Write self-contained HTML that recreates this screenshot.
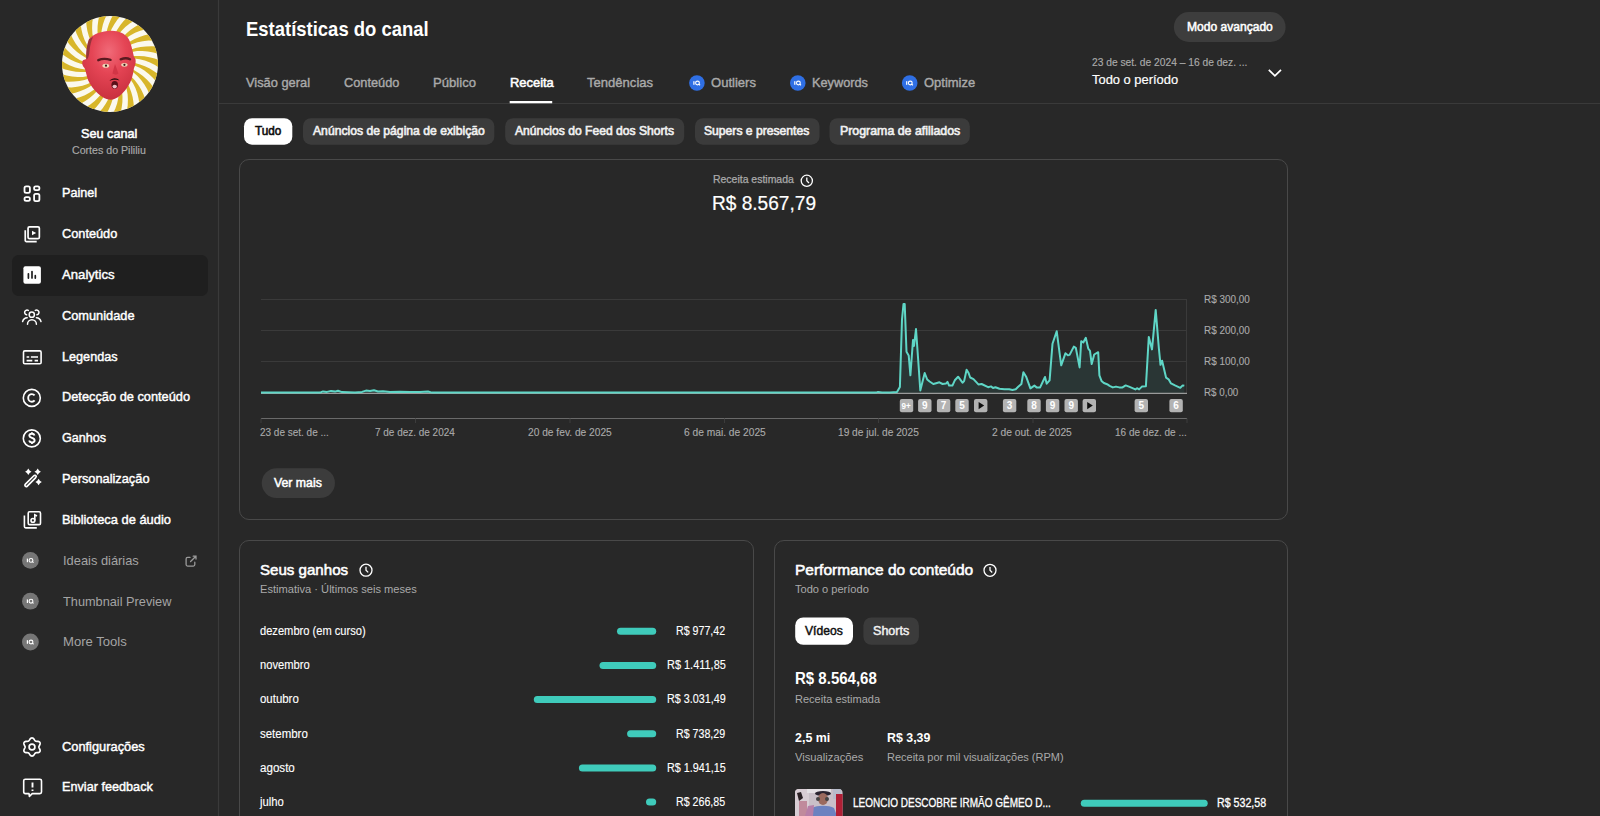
<!DOCTYPE html>
<html><head><meta charset="utf-8">
<style>
*{margin:0;padding:0;box-sizing:border-box}
html,body{width:1600px;height:816px;overflow:hidden;background:#282828;font-family:"Liberation Sans",sans-serif;color:#fff}
.full{position:absolute;left:0;top:0}
.t{position:absolute;white-space:nowrap;line-height:1;transform-origin:0 0}
.av{position:absolute;left:62.3px;top:16px;width:95.8px;height:95.8px;border-radius:50%;overflow:hidden}

</style></head><body>
<svg class="full" width="1600" height="816" viewBox="0 0 1600 816" font-family="Liberation Sans">
<line x1="218.5" y1="0" x2="218.5" y2="816" stroke="#3a3a3a" stroke-width="1.2"/>
<rect x="12" y="255" width="196" height="41" rx="6.5" fill="#1f1f1f"/>
<g transform="translate(20,181)" ><g fill="none" stroke="#fff" stroke-width="1.8"><rect x="4.5" y="5.3" width="5.4" height="6.6" rx="1.6"/><rect x="14.1" y="5.3" width="5.3" height="3.8" rx="1.6"/><rect x="4.5" y="16.1" width="5.4" height="3.7" rx="1.6"/><rect x="14.1" y="12.9" width="5.3" height="7.3" rx="1.6"/></g></g><g transform="translate(20,222)" ><g fill="none" stroke="#fff" stroke-width="1.7"><rect x="8.05" y="4.85" width="11.3" height="11.7" rx="1.4"/><path d="M5.25 8.2 V18.4 a1.2 1.2 0 0 0 1.2 1.2 H16.7"/></g><path d="M12 8.8 L16.2 11 L12 13.2 Z" fill="#fff"/></g><g transform="translate(20,263)" ><rect x="3.4" y="3.3" width="17.5" height="17.5" rx="2" fill="#fff"/><g stroke="#1f1f1f" stroke-width="1.7" stroke-linecap="round"><path d="M8.4 10.8 V15.1 M12 8.6 V14.9 M15.3 12.7 V15.1"/></g></g><g transform="translate(20,304)" ><g fill="none" stroke="#fff" stroke-width="1.5" stroke-linecap="round"><circle cx="11.8" cy="10.7" r="2.6"/><path d="M7.5 20.3 A4.45 4.45 0 0 1 16.4 20.3"/><path d="M8.3 6.4 A2.4 2.4 0 1 0 6.6 10.8"/><path d="M15.3 6.4 A2.4 2.4 0 1 1 17 10.8"/><path d="M2.6 17.6 A5 5 0 0 1 7.2 13.8"/><path d="M16.4 13.8 A5 5 0 0 1 21 17.6"/></g></g><g transform="translate(20,345)" ><g fill="none" stroke="#fff" stroke-width="1.6"><rect x="3.5" y="5.9" width="17.6" height="12.9" rx="1.3"/><path d="M6.6 12 H9.2 M10.9 12 H18 M6.6 15.6 H12.3 M14.6 15.6 H18"/></g></g><g transform="translate(20,386)" ><g fill="none" stroke="#fff" stroke-width="1.6"><circle cx="11.8" cy="11.9" r="8.5"/><path stroke-width="1.9" d="M14.6 9.4 C13.9 8.5 13 8.1 11.9 8.1 C9.8 8.1 8.2 9.8 8.2 11.9 C8.2 14 9.8 15.7 11.9 15.7 C13 15.7 13.9 15.3 14.6 14.4"/></g></g><g transform="translate(20,426)" ><g fill="none" stroke="#fff" stroke-width="1.6"><circle cx="11.8" cy="12.4" r="8.5"/><path stroke-width="1.9" d="M14.5 9.4 C14.2 8.3 13.2 7.8 11.9 7.8 C10.3 7.8 9.3 8.6 9.3 9.8 C9.3 12.4 14.6 11.4 14.6 14.2 C14.6 15.5 13.4 16.4 11.9 16.4 C10.4 16.4 9.4 15.7 9.1 14.6 M11.9 6.2 V7.8 M11.9 16.4 V18"/></g></g><g transform="translate(20,467)" ><path d="M8.3 1.4999999999999991 Q9.324000000000002 3.6759999999999993 11.5 4.699999999999999 Q9.324000000000002 5.723999999999999 8.3 7.8999999999999995 Q7.276000000000001 5.723999999999999 5.1000000000000005 4.699999999999999 Q7.276000000000001 3.6759999999999993 8.3 1.4999999999999991Z M17.7 1.5 Q18.724 3.676 20.9 4.7 Q18.724 5.724 17.7 7.9 Q16.676 5.724 14.5 4.7 Q16.676 3.676 17.7 1.5Z M18.6 11.8 Q19.624000000000002 13.975999999999999 21.8 15 Q19.624000000000002 16.024 18.6 18.2 Q17.576 16.024 15.400000000000002 15 Q17.576 13.975999999999999 18.6 11.8Z" fill="#fff"/><path d="M5.4 17.2 L13.6 9 C14.4 8.2 15.6 8.2 15.9 8.7 C16.3 9.1 16.2 10.2 15.5 10.9 L7.3 19.1 C6.7 19.7 5.8 19.7 5.3 19.2 C4.8 18.7 4.8 17.8 5.4 17.2Z" fill="none" stroke="#fff" stroke-width="1.7"/></g><g transform="translate(20,508)" ><g fill="none" stroke="#fff" stroke-width="1.6"><rect x="8.2" y="3.8" width="12.3" height="12.8" rx="1.4"/><path d="M4.4 7.6 V18.6 a1.3 1.3 0 0 0 1.3 1.3 H16.8"/><circle cx="12.9" cy="12.4" r="1.9"/><path d="M14.8 12.4 V6.8 L17 8"/></g></g><g transform="translate(20,735)" ><g fill="none" stroke="#fff" stroke-width="1.7" stroke-linejoin="round"><path d="M18.90 12.00 L18.94 12.36 L19.07 12.74 L19.26 13.15 L19.49 13.59 L19.73 14.07 L19.93 14.58 L20.07 15.10 L20.12 15.62 L20.06 16.11 L19.88 16.55 L19.59 16.93 L19.19 17.23 L18.72 17.44 L18.20 17.58 L17.66 17.66 L17.13 17.69 L16.63 17.71 L16.18 17.75 L15.79 17.83 L15.45 17.98 L15.16 18.20 L14.89 18.50 L14.64 18.87 L14.37 19.29 L14.07 19.73 L13.73 20.16 L13.35 20.54 L12.93 20.84 L12.47 21.03 L12.00 21.10 L11.53 21.03 L11.07 20.84 L10.65 20.54 L10.27 20.16 L9.93 19.73 L9.63 19.29 L9.36 18.87 L9.11 18.50 L8.84 18.20 L8.55 17.98 L8.21 17.83 L7.82 17.75 L7.37 17.71 L6.87 17.69 L6.34 17.66 L5.80 17.58 L5.28 17.44 L4.81 17.23 L4.41 16.93 L4.12 16.55 L3.94 16.11 L3.88 15.62 L3.93 15.10 L4.07 14.58 L4.27 14.07 L4.51 13.59 L4.74 13.15 L4.93 12.74 L5.06 12.36 L5.10 12.00 L5.06 11.64 L4.93 11.26 L4.74 10.85 L4.51 10.41 L4.27 9.93 L4.07 9.42 L3.93 8.90 L3.88 8.38 L3.94 7.89 L4.12 7.45 L4.41 7.07 L4.81 6.77 L5.28 6.56 L5.80 6.42 L6.34 6.34 L6.87 6.31 L7.37 6.29 L7.82 6.25 L8.21 6.17 L8.55 6.02 L8.84 5.80 L9.11 5.50 L9.36 5.13 L9.63 4.71 L9.93 4.27 L10.27 3.84 L10.65 3.46 L11.07 3.16 L11.53 2.97 L12.00 2.90 L12.47 2.97 L12.93 3.16 L13.35 3.46 L13.73 3.84 L14.07 4.27 L14.37 4.71 L14.64 5.13 L14.89 5.50 L15.16 5.80 L15.45 6.02 L15.79 6.17 L16.18 6.25 L16.63 6.29 L17.13 6.31 L17.66 6.34 L18.20 6.42 L18.72 6.56 L19.19 6.77 L19.59 7.07 L19.88 7.45 L20.06 7.89 L20.12 8.38 L20.07 8.90 L19.93 9.42 L19.73 9.93 L19.49 10.41 L19.26 10.85 L19.07 11.26 L18.94 11.64 L18.90 12.00Z"/><circle cx="12" cy="12" r="2.9"/></g></g><g transform="translate(20,775)" ><path d="M3.7 5.8 a1.6 1.6 0 0 1 1.6 -1.6 H19.9 a1.6 1.6 0 0 1 1.6 1.6 V17 a1.6 1.6 0 0 1 -1.6 1.6 H12.2 L9.4 21.4 L9 18.6 H5.3 a1.6 1.6 0 0 1 -1.6 -1.6 Z" fill="none" stroke="#fff" stroke-width="1.6" stroke-linejoin="round"/><path d="M12.5 7.4 V12.6 M12.5 14.4 V16" stroke="#fff" stroke-width="1.9"/></g>
<circle cx="30.4" cy="560.4" r="8.4" fill="#767676"/><rect x="26.8" y="558.6" width="1.2" height="3.6" fill="#fff"/><circle cx="31.0" cy="560.4" r="1.9" fill="none" stroke="#fff" stroke-width="1.1"/><path d="M32.0 561.4 L33.6 562.6" stroke="#fff" stroke-width="1.1"/><circle cx="30.4" cy="601.2" r="8.4" fill="#767676"/><rect x="26.8" y="599.4" width="1.2" height="3.6" fill="#fff"/><circle cx="31.0" cy="601.2" r="1.9" fill="none" stroke="#fff" stroke-width="1.1"/><path d="M32.0 602.2 L33.6 603.4" stroke="#fff" stroke-width="1.1"/><circle cx="30.4" cy="642" r="8.4" fill="#767676"/><rect x="26.8" y="640.2" width="1.2" height="3.6" fill="#fff"/><circle cx="31.0" cy="642.0" r="1.9" fill="none" stroke="#fff" stroke-width="1.1"/><path d="M32.0 643.0 L33.6 644.2" stroke="#fff" stroke-width="1.1"/>
<path d="M190 557.4 H187.6 a1.5 1.5 0 0 0 -1.5 1.5 V564.6 a1.5 1.5 0 0 0 1.5 1.5 H193.3 a1.5 1.5 0 0 0 1.5 -1.5 V562.2 M190.6 561.5 L195.9 556.3 M193.2 556.2 H196 V559" fill="none" stroke="#9a9a9a" stroke-width="1.3" stroke-linecap="round"/>
<line x1="218" y1="103.5" x2="1600" y2="103.5" stroke="#3a3a3a" stroke-width="1"/>
<rect x="509.7" y="101" width="42.5" height="2.3" fill="#fff"/>
<rect x="1173.9" y="12" width="111.7" height="30" rx="15" fill="#3d3d3d"/>
<path d="M1268.8 69.8 L1274.9 75.9 L1281 69.8" fill="none" stroke="#fff" stroke-width="1.7"/>
<circle cx="696.9" cy="83" r="7.8" fill="#2f6fe4"/><rect x="693.3" y="81.2" width="1.2" height="3.6" fill="#fff"/><circle cx="697.5" cy="83.0" r="1.9" fill="none" stroke="#fff" stroke-width="1.1"/><path d="M698.5 84.0 L700.1 85.2" stroke="#fff" stroke-width="1.1"/><circle cx="797.8" cy="83" r="7.8" fill="#2f6fe4"/><rect x="794.2" y="81.2" width="1.2" height="3.6" fill="#fff"/><circle cx="798.4" cy="83.0" r="1.9" fill="none" stroke="#fff" stroke-width="1.1"/><path d="M799.4 84.0 L801.0 85.2" stroke="#fff" stroke-width="1.1"/><circle cx="909.7" cy="83" r="7.8" fill="#2f6fe4"/><rect x="906.1" y="81.2" width="1.2" height="3.6" fill="#fff"/><circle cx="910.3" cy="83.0" r="1.9" fill="none" stroke="#fff" stroke-width="1.1"/><path d="M911.3 84.0 L912.9 85.2" stroke="#fff" stroke-width="1.1"/>
<rect x="244" y="118.2" width="48.3" height="26.5" rx="8" fill="#fff"/>
<rect x="303" y="118.2" width="191.3" height="26.5" rx="8" fill="#3b3b3b"/>
<rect x="505.2" y="118.2" width="179" height="26.5" rx="8" fill="#3b3b3b"/>
<rect x="695" y="118.2" width="124.5" height="26.5" rx="8" fill="#3b3b3b"/>
<rect x="829.5" y="118.2" width="140.3" height="26.5" rx="8" fill="#3b3b3b"/>
<rect x="239.5" y="159.5" width="1048" height="360" rx="9.5" fill="none" stroke="#494949" stroke-width="1"/>
<circle cx="806.8" cy="180.8" r="5.6" fill="none" stroke="#fff" stroke-width="1.3"/><path d="M806.8 177.4 V180.8 L809.0 183.0" fill="none" stroke="#fff" stroke-width="1.3"/>
<g stroke="#3a3a3a" stroke-width="1"><line x1="261" y1="299.5" x2="1187" y2="299.5"/><line x1="261" y1="330.5" x2="1187" y2="330.5"/><line x1="261" y1="361.5" x2="1187" y2="361.5"/><line x1="1186.5" y1="299" x2="1186.5" y2="393"/></g>
<path d="M261.0 392.6 L320.0 392.6 L323.0 391.4 L327.0 391.9 L331.0 390.9 L335.0 391.6 L338.0 390.7 L342.0 392.1 L355.0 392.4 L362.0 391.9 L366.0 390.6 L370.0 391.1 L374.0 390.3 L378.0 391.5 L383.0 391.3 L390.0 391.9 L400.0 391.7 L410.0 392.1 L420.0 392.1 L428.0 391.5 L432.0 392.6 L876.0 392.6 L878.0 391.9 L882.0 392.6 L890.0 392.4 L897.0 392.1 L899.9 387.0 L902.0 319.4 L903.5 304.0 L904.7 304.0 L906.5 351.8 L908.7 355.4 L910.4 375.3 L913.0 340.0 L914.0 345.9 L916.0 329.0 L918.2 360.0 L920.3 390.5 L924.7 373.0 L927.2 379.5 L929.6 381.5 L933.3 384.0 L936.1 383.2 L939.4 382.3 L942.6 384.0 L945.9 383.6 L947.5 381.9 L949.1 385.6 L952.4 385.6 L954.8 380.3 L958.1 376.7 L962.5 382.7 L964.1 381.1 L966.6 369.7 L968.6 373.0 L970.2 377.5 L973.5 379.1 L978.4 384.4 L981.6 384.0 L988.1 387.2 L991.0 386.4 L993.0 388.0 L995.4 387.2 L999.5 388.8 L1004.4 389.2 L1009.2 389.2 L1012.5 390.0 L1015.7 389.2 L1018.2 386.8 L1021.4 384.0 L1023.4 372.2 L1026.3 377.1 L1030.4 388.4 L1034.4 385.6 L1036.9 387.6 L1040.1 387.4 L1045.0 377.0 L1046.7 383.7 L1049.6 380.3 L1052.5 343.7 L1056.7 331.2 L1061.2 365.3 L1065.4 353.3 L1067.9 355.3 L1069.6 354.9 L1073.8 346.6 L1075.8 347.8 L1079.6 367.4 L1081.2 341.2 L1083.3 342.4 L1085.8 337.8 L1088.3 348.7 L1090.0 350.8 L1091.7 364.1 L1094.2 354.5 L1098.2 352.2 L1099.4 375.3 L1101.5 380.9 L1103.9 383.0 L1107.1 384.2 L1109.6 385.8 L1112.8 387.4 L1116.0 386.6 L1119.3 387.4 L1122.5 387.4 L1125.7 385.4 L1129.0 386.6 L1135.4 389.4 L1137.0 388.2 L1139.1 389.4 L1141.9 386.6 L1145.9 386.2 L1148.8 336.9 L1152.0 349.4 L1155.7 309.9 L1158.9 348.6 L1160.5 364.8 L1162.1 360.7 L1166.1 377.7 L1168.6 379.3 L1171.0 383.4 L1175.0 385.4 L1180.3 387.8 L1182.7 385.4 L1184.3 385.8 L1184.3 393 L261 393 Z" fill="#40c9b9" fill-opacity="0.09"/>
<line x1="261" y1="393.3" x2="1187" y2="393.3" stroke="#9a9a9a" stroke-width="1.3"/>
<path d="M261.0 392.6 L320.0 392.6 L323.0 391.4 L327.0 391.9 L331.0 390.9 L335.0 391.6 L338.0 390.7 L342.0 392.1 L355.0 392.4 L362.0 391.9 L366.0 390.6 L370.0 391.1 L374.0 390.3 L378.0 391.5 L383.0 391.3 L390.0 391.9 L400.0 391.7 L410.0 392.1 L420.0 392.1 L428.0 391.5 L432.0 392.6 L876.0 392.6 L878.0 391.9 L882.0 392.6 L890.0 392.4 L897.0 392.1 L899.9 387.0 L902.0 319.4 L903.5 304.0 L904.7 304.0 L906.5 351.8 L908.7 355.4 L910.4 375.3 L913.0 340.0 L914.0 345.9 L916.0 329.0 L918.2 360.0 L920.3 390.5 L924.7 373.0 L927.2 379.5 L929.6 381.5 L933.3 384.0 L936.1 383.2 L939.4 382.3 L942.6 384.0 L945.9 383.6 L947.5 381.9 L949.1 385.6 L952.4 385.6 L954.8 380.3 L958.1 376.7 L962.5 382.7 L964.1 381.1 L966.6 369.7 L968.6 373.0 L970.2 377.5 L973.5 379.1 L978.4 384.4 L981.6 384.0 L988.1 387.2 L991.0 386.4 L993.0 388.0 L995.4 387.2 L999.5 388.8 L1004.4 389.2 L1009.2 389.2 L1012.5 390.0 L1015.7 389.2 L1018.2 386.8 L1021.4 384.0 L1023.4 372.2 L1026.3 377.1 L1030.4 388.4 L1034.4 385.6 L1036.9 387.6 L1040.1 387.4 L1045.0 377.0 L1046.7 383.7 L1049.6 380.3 L1052.5 343.7 L1056.7 331.2 L1061.2 365.3 L1065.4 353.3 L1067.9 355.3 L1069.6 354.9 L1073.8 346.6 L1075.8 347.8 L1079.6 367.4 L1081.2 341.2 L1083.3 342.4 L1085.8 337.8 L1088.3 348.7 L1090.0 350.8 L1091.7 364.1 L1094.2 354.5 L1098.2 352.2 L1099.4 375.3 L1101.5 380.9 L1103.9 383.0 L1107.1 384.2 L1109.6 385.8 L1112.8 387.4 L1116.0 386.6 L1119.3 387.4 L1122.5 387.4 L1125.7 385.4 L1129.0 386.6 L1135.4 389.4 L1137.0 388.2 L1139.1 389.4 L1141.9 386.6 L1145.9 386.2 L1148.8 336.9 L1152.0 349.4 L1155.7 309.9 L1158.9 348.6 L1160.5 364.8 L1162.1 360.7 L1166.1 377.7 L1168.6 379.3 L1171.0 383.4 L1175.0 385.4 L1180.3 387.8 L1182.7 385.4 L1184.3 385.8" fill="none" stroke="#5fd6c6" stroke-width="2" stroke-linejoin="round"/>
<rect x="899.8" y="399" width="13.4" height="13.2" rx="2" fill="#b3b3b3"/><text x="901.4" y="409.3" font-size="9.5" font-weight="bold" fill="#fff" transform="translate(901.4 0) scale(0.85 1) translate(-901.4 0)">9+</text><rect x="918.1" y="399" width="13.4" height="13.2" rx="2" fill="#b3b3b3"/><text x="924.8" y="409.3" font-size="10" font-weight="bold" fill="#fff" text-anchor="middle">9</text><rect x="936.9" y="399" width="13.4" height="13.2" rx="2" fill="#b3b3b3"/><text x="943.6" y="409.3" font-size="10" font-weight="bold" fill="#fff" text-anchor="middle">7</text><rect x="955.3" y="399" width="13.4" height="13.2" rx="2" fill="#b3b3b3"/><text x="962.0" y="409.3" font-size="10" font-weight="bold" fill="#fff" text-anchor="middle">5</text><rect x="974.0" y="399" width="13.4" height="13.2" rx="2" fill="#b3b3b3"/><path d="M978.6 402 L984.2 405.6 L978.6 409.2 Z" fill="#0f0f0f"/><rect x="1002.9" y="399" width="13.4" height="13.2" rx="2" fill="#b3b3b3"/><text x="1009.6" y="409.3" font-size="10" font-weight="bold" fill="#fff" text-anchor="middle">3</text><rect x="1027.3" y="399" width="13.4" height="13.2" rx="2" fill="#b3b3b3"/><text x="1034.0" y="409.3" font-size="10" font-weight="bold" fill="#fff" text-anchor="middle">8</text><rect x="1045.9" y="399" width="13.4" height="13.2" rx="2" fill="#b3b3b3"/><text x="1052.6" y="409.3" font-size="10" font-weight="bold" fill="#fff" text-anchor="middle">9</text><rect x="1064.5" y="399" width="13.4" height="13.2" rx="2" fill="#b3b3b3"/><text x="1071.2" y="409.3" font-size="10" font-weight="bold" fill="#fff" text-anchor="middle">9</text><rect x="1082.6" y="399" width="13.4" height="13.2" rx="2" fill="#b3b3b3"/><path d="M1087.2 402 L1092.8 405.6 L1087.2 409.2 Z" fill="#0f0f0f"/><rect x="1134.6" y="399" width="13.4" height="13.2" rx="2" fill="#b3b3b3"/><text x="1141.3" y="409.3" font-size="10" font-weight="bold" fill="#fff" text-anchor="middle">5</text><rect x="1169.4" y="399" width="13.4" height="13.2" rx="2" fill="#b3b3b3"/><text x="1176.1" y="409.3" font-size="10" font-weight="bold" fill="#fff" text-anchor="middle">6</text>
<line x1="261" y1="418.5" x2="1187" y2="418.5" stroke="#6a6a6a" stroke-width="1.1"/>
<line x1="261" y1="418.5" x2="261" y2="423" stroke="#3c3c3c" stroke-width="1"/><line x1="415.5" y1="418.5" x2="415.5" y2="423" stroke="#3c3c3c" stroke-width="1"/><line x1="570" y1="418.5" x2="570" y2="423" stroke="#3c3c3c" stroke-width="1"/><line x1="724.5" y1="418.5" x2="724.5" y2="423" stroke="#3c3c3c" stroke-width="1"/><line x1="878.5" y1="418.5" x2="878.5" y2="423" stroke="#3c3c3c" stroke-width="1"/><line x1="1033" y1="418.5" x2="1033" y2="423" stroke="#3c3c3c" stroke-width="1"/><line x1="1187" y1="418.5" x2="1187" y2="423" stroke="#3c3c3c" stroke-width="1"/>
<rect x="261.75" y="468.2" width="73.2" height="29.8" rx="14.9" fill="#3c3c3c"/>
<rect x="239.5" y="540.5" width="514" height="300" rx="9.5" fill="none" stroke="#494949" stroke-width="1"/>
<rect x="774.5" y="540.5" width="513" height="300" rx="9.5" fill="none" stroke="#494949" stroke-width="1"/>
<circle cx="366" cy="570.2" r="6" fill="none" stroke="#fff" stroke-width="1.3"/><path d="M366 566.8 V570.2 L368.2 572.4" fill="none" stroke="#fff" stroke-width="1.3"/>
<circle cx="990" cy="570.3" r="6" fill="none" stroke="#fff" stroke-width="1.3"/><path d="M990 566.9 V570.3 L992.2 572.5" fill="none" stroke="#fff" stroke-width="1.3"/>
<line x1="620.5" y1="631.3" x2="652.7" y2="631.3" stroke="#3fcbbb" stroke-width="7" stroke-linecap="round"/><line x1="603.0" y1="665.45" x2="652.7" y2="665.45" stroke="#3fcbbb" stroke-width="7" stroke-linecap="round"/><line x1="537.3" y1="699.6" x2="652.7" y2="699.6" stroke="#3fcbbb" stroke-width="7" stroke-linecap="round"/><line x1="630.6" y1="733.75" x2="652.7" y2="733.75" stroke="#3fcbbb" stroke-width="7" stroke-linecap="round"/><line x1="582.4" y1="767.9" x2="652.7" y2="767.9" stroke="#3fcbbb" stroke-width="7" stroke-linecap="round"/><line x1="649.5" y1="802.05" x2="652.7" y2="802.05" stroke="#3fcbbb" stroke-width="7" stroke-linecap="round"/>
<rect x="795.2" y="617.4" width="57.8" height="27.4" rx="8" fill="#fff"/>
<rect x="863.4" y="617.4" width="55.5" height="27.4" rx="8" fill="#3b3b3b"/>
<line x1="1084.3" y1="803.3" x2="1204.2" y2="803.3" stroke="#3fcbbb" stroke-width="7" stroke-linecap="round"/>
</svg>
<div class="av">
<svg width="96" height="96" viewBox="0 0 96 96" style="position:absolute;left:0;top:0">
<rect width="96" height="96" fill="#fbf9ee"/>
<path d="M48.0 48.0 L53.0 48.2 L58.0 49.0 L62.8 50.2 L67.6 52.0 L72.2 54.2 L76.7 56.9 L80.9 60.0 L84.8 63.6 L88.5 67.6 L91.9 72.0 L87.6 78.5 L85.2 73.3 L82.4 68.4 L79.1 64.0 L75.5 60.0 L71.5 56.6 L67.2 53.7 L62.6 51.4 L57.9 49.7 L53.0 48.5 L48.0 48.0Z M48.0 48.0 L52.7 49.6 L57.3 51.8 L61.6 54.3 L65.7 57.3 L69.5 60.8 L73.0 64.6 L76.2 68.8 L79.0 73.3 L81.4 78.2 L83.3 83.4 L77.4 88.5 L76.6 82.7 L75.3 77.3 L73.4 72.1 L71.0 67.3 L68.1 62.9 L64.8 58.9 L61.0 55.4 L57.0 52.4 L52.6 49.9 L48.0 48.0Z M48.0 48.0 L52.1 50.9 L55.8 54.2 L59.3 57.9 L62.3 61.9 L65.0 66.3 L67.3 71.0 L69.2 75.9 L70.6 81.0 L71.5 86.4 L72.0 91.9 L64.8 95.1 L65.7 89.4 L65.9 83.8 L65.6 78.3 L64.6 73.0 L63.1 67.9 L61.0 63.2 L58.4 58.8 L55.4 54.7 L51.9 51.1 L48.0 48.0Z M48.0 48.0 L51.1 51.9 L53.8 56.2 L56.0 60.7 L57.8 65.4 L59.2 70.4 L60.1 75.5 L60.5 80.7 L60.4 86.0 L59.7 91.4 L58.6 96.9 L50.8 97.9 L53.3 92.7 L55.1 87.4 L56.3 82.0 L56.9 76.7 L56.9 71.4 L56.2 66.2 L55.0 61.3 L53.2 56.6 L50.8 52.1 L48.0 48.0Z M48.0 48.0 L49.8 52.6 L51.2 57.5 L52.1 62.4 L52.5 67.5 L52.4 72.6 L51.8 77.8 L50.7 82.9 L49.1 88.0 L47.0 93.0 L44.4 97.9 L36.7 96.7 L40.5 92.4 L43.7 87.8 L46.4 83.0 L48.5 78.0 L49.9 72.9 L50.7 67.8 L51.0 62.7 L50.6 57.7 L49.6 52.7 L48.0 48.0Z M48.0 48.0 L48.5 53.0 L48.4 58.0 L47.9 63.0 L46.9 68.0 L45.3 72.9 L43.3 77.6 L40.8 82.3 L37.8 86.7 L34.4 90.9 L30.5 94.8 L23.4 91.5 L28.3 88.5 L32.7 85.0 L36.6 81.1 L40.0 76.9 L42.8 72.5 L45.0 67.8 L46.7 62.9 L47.7 58.0 L48.2 53.0 L48.0 48.0Z M48.0 48.0 L47.0 52.9 L45.6 57.7 L43.7 62.4 L41.3 66.8 L38.4 71.1 L35.1 75.1 L31.4 78.8 L27.3 82.3 L22.9 85.3 L18.0 88.0 L12.1 82.8 L17.7 81.3 L22.9 79.2 L27.8 76.5 L32.2 73.5 L36.1 70.0 L39.6 66.1 L42.5 62.0 L44.9 57.5 L46.8 52.8 L48.0 48.0Z M48.0 48.0 L45.7 52.4 L43.0 56.6 L39.8 60.6 L36.2 64.2 L32.3 67.5 L28.0 70.4 L23.4 72.9 L18.5 75.0 L13.4 76.7 L8.0 78.0 L3.8 71.3 L9.5 71.4 L15.2 70.8 L20.5 69.7 L25.6 68.0 L30.4 65.8 L34.8 63.0 L38.8 59.9 L42.4 56.3 L45.4 52.3 L48.0 48.0Z M48.0 48.0 L44.5 51.6 L40.7 54.9 L36.6 57.7 L32.2 60.2 L27.5 62.3 L22.5 63.9 L17.4 65.0 L12.1 65.6 L6.7 65.8 L1.1 65.5 L-1.0 57.9 L4.5 59.6 L10.1 60.6 L15.5 61.1 L20.9 60.9 L26.1 60.1 L31.1 58.7 L35.9 56.8 L40.3 54.3 L44.3 51.4 L48.0 48.0Z M48.0 48.0 L43.7 50.5 L39.1 52.5 L34.3 54.1 L29.4 55.3 L24.3 55.9 L19.1 56.0 L13.9 55.7 L8.6 54.8 L3.3 53.4 L-1.9 51.6 L-1.8 43.7 L3.0 46.9 L8.0 49.4 L13.2 51.4 L18.4 52.7 L23.6 53.4 L28.8 53.5 L33.9 53.0 L38.8 51.9 L43.5 50.2 L48.0 48.0Z M48.0 48.0 L43.1 49.2 L38.2 49.8 L33.1 50.0 L28.1 49.7 L23.0 48.9 L18.0 47.6 L13.1 45.7 L8.3 43.4 L3.6 40.6 L-0.9 37.4 L1.4 29.9 L5.2 34.3 L9.2 38.1 L13.6 41.4 L18.2 44.2 L23.1 46.3 L28.0 47.9 L33.0 48.8 L38.1 49.2 L43.1 48.9 L48.0 48.0Z M48.0 48.0 L43.0 47.8 L38.0 47.0 L33.2 45.8 L28.4 44.0 L23.8 41.8 L19.3 39.1 L15.1 36.0 L11.2 32.4 L7.5 28.4 L4.1 24.0 L8.4 17.5 L10.8 22.7 L13.6 27.6 L16.9 32.0 L20.5 36.0 L24.5 39.4 L28.8 42.3 L33.4 44.6 L38.1 46.3 L43.0 47.5 L48.0 48.0Z M48.0 48.0 L43.3 46.4 L38.7 44.2 L34.4 41.7 L30.3 38.7 L26.5 35.2 L23.0 31.4 L19.8 27.2 L17.0 22.7 L14.6 17.8 L12.7 12.6 L18.6 7.5 L19.4 13.3 L20.7 18.7 L22.6 23.9 L25.0 28.7 L27.9 33.1 L31.2 37.1 L35.0 40.6 L39.0 43.6 L43.4 46.1 L48.0 48.0Z M48.0 48.0 L43.9 45.1 L40.2 41.8 L36.7 38.1 L33.7 34.1 L31.0 29.7 L28.7 25.0 L26.8 20.1 L25.4 15.0 L24.5 9.6 L24.0 4.1 L31.2 0.9 L30.3 6.6 L30.1 12.2 L30.4 17.7 L31.4 23.0 L32.9 28.1 L35.0 32.8 L37.6 37.2 L40.6 41.3 L44.1 44.9 L48.0 48.0Z M48.0 48.0 L44.9 44.1 L42.2 39.8 L40.0 35.3 L38.2 30.6 L36.8 25.6 L35.9 20.5 L35.5 15.3 L35.6 10.0 L36.3 4.6 L37.4 -0.9 L45.2 -1.9 L42.7 3.3 L40.9 8.6 L39.7 14.0 L39.1 19.3 L39.1 24.6 L39.8 29.8 L41.0 34.7 L42.8 39.4 L45.2 43.9 L48.0 48.0Z M48.0 48.0 L46.2 43.4 L44.8 38.5 L43.9 33.6 L43.5 28.5 L43.6 23.4 L44.2 18.2 L45.3 13.1 L46.9 8.0 L49.0 3.0 L51.6 -1.9 L59.3 -0.7 L55.5 3.6 L52.3 8.2 L49.6 13.0 L47.5 18.0 L46.1 23.1 L45.3 28.2 L45.0 33.3 L45.4 38.3 L46.4 43.3 L48.0 48.0Z M48.0 48.0 L47.5 43.0 L47.6 38.0 L48.1 33.0 L49.1 28.0 L50.7 23.1 L52.7 18.4 L55.2 13.7 L58.2 9.3 L61.6 5.1 L65.5 1.2 L72.6 4.5 L67.7 7.5 L63.3 11.0 L59.4 14.9 L56.0 19.1 L53.2 23.5 L51.0 28.2 L49.3 33.1 L48.3 38.0 L47.8 43.0 L48.0 48.0Z M48.0 48.0 L49.0 43.1 L50.4 38.3 L52.3 33.6 L54.7 29.2 L57.6 24.9 L60.9 20.9 L64.6 17.2 L68.7 13.7 L73.1 10.7 L78.0 8.0 L83.9 13.2 L78.3 14.7 L73.1 16.8 L68.2 19.5 L63.8 22.5 L59.9 26.0 L56.4 29.9 L53.5 34.0 L51.1 38.5 L49.2 43.2 L48.0 48.0Z M48.0 48.0 L50.3 43.6 L53.0 39.4 L56.2 35.4 L59.8 31.8 L63.7 28.5 L68.0 25.6 L72.6 23.1 L77.5 21.0 L82.6 19.3 L88.0 18.0 L92.2 24.7 L86.5 24.6 L80.8 25.2 L75.5 26.3 L70.4 28.0 L65.6 30.2 L61.2 33.0 L57.2 36.1 L53.6 39.7 L50.6 43.7 L48.0 48.0Z M48.0 48.0 L51.5 44.4 L55.3 41.1 L59.4 38.3 L63.8 35.8 L68.5 33.7 L73.5 32.1 L78.6 31.0 L83.9 30.4 L89.3 30.2 L94.9 30.5 L97.0 38.1 L91.5 36.4 L85.9 35.4 L80.5 34.9 L75.1 35.1 L69.9 35.9 L64.9 37.3 L60.1 39.2 L55.7 41.7 L51.7 44.6 L48.0 48.0Z M48.0 48.0 L52.3 45.5 L56.9 43.5 L61.7 41.9 L66.6 40.7 L71.7 40.1 L76.9 40.0 L82.1 40.3 L87.4 41.2 L92.7 42.6 L97.9 44.4 L97.8 52.3 L93.0 49.1 L88.0 46.6 L82.8 44.6 L77.6 43.3 L72.4 42.6 L67.2 42.5 L62.1 43.0 L57.2 44.1 L52.5 45.8 L48.0 48.0Z M48.0 48.0 L52.9 46.8 L57.8 46.2 L62.9 46.0 L67.9 46.3 L73.0 47.1 L78.0 48.4 L82.9 50.3 L87.7 52.6 L92.4 55.4 L96.9 58.6 L94.6 66.1 L90.8 61.7 L86.8 57.9 L82.4 54.6 L77.8 51.8 L72.9 49.7 L68.0 48.1 L63.0 47.2 L57.9 46.8 L52.9 47.1 L48.0 48.0Z" fill="#d8b62a"/>
<defs><radialGradient id="fg" cx="0.5" cy="0.3" r="0.7"><stop offset="0" stop-color="#f06a78"/><stop offset="0.45" stop-color="#e54555"/><stop offset="1" stop-color="#c9303f"/></radialGradient></defs>
<path d="M48.5 14.8 C58 14.5 66 19 68 26 C70 31 71 37 72 41 C74 42 74.5 47 72 52 C71 60 69 66 66.2 69.8 C62 77 55 83.8 48.5 83.8 C40 83.5 31 74 26.1 64.2 C24.5 59 23.5 54 22.5 52 C20 50 19.5 45 21.4 44 C22.5 43.5 23.5 43.5 24.2 43 C24 36 25 28 27 23.2 C31 18 40 15 48.5 14.8 Z" fill="url(#fg)"/>
<path d="M27 23.2 C25 28 24 36 24.2 43 C26 44 27 40 27.5 35 C28 30 29 25 31 21 Z" fill="#5a2a2a" opacity="0.55"/>
<path d="M36.3 44.2 C40 42.5 45 42.8 48.5 43.8 M58.7 43.3 C62 42 66 42.2 68 43.2" stroke="#5a1a20" stroke-width="2.4" stroke-linecap="round" fill="none"/>
<ellipse cx="43.8" cy="49.7" rx="3.4" ry="2" fill="#efd6b8"/><ellipse cx="62.4" cy="48.8" rx="3.2" ry="1.9" fill="#efd6b8"/>
<circle cx="44" cy="49.7" r="1.1" fill="#3a1a1a"/><circle cx="62.4" cy="48.8" r="1.1" fill="#3a1a1a"/>
<path d="M53 48 C52 52 51 55 50.5 57.5 C52.5 59 55 59 56.5 57.5 C55.5 55 54.5 52 53 48Z" fill="#d23546"/>
<path d="M47.5 65 C50 61.5 55 61.5 57.5 64.5 C55 63.5 50 63.5 47.5 65Z" fill="#2a1010"/>
<ellipse cx="52.7" cy="68.8" rx="3.3" ry="3.9" fill="#5a1018"/><ellipse cx="52.7" cy="70.6" rx="2.2" ry="1.8" fill="#f0c0c6"/>
</svg></div>
<svg style="position:absolute;left:795px;top:789px" width="48" height="27" viewBox="0 0 48 27"><defs><clipPath id="tc"><rect width="47.6" height="30" rx="4"/></clipPath></defs><g clip-path="url(#tc)">
<rect width="48" height="27" fill="#c9c0c8"/>
<rect x="0" y="0" width="14" height="27" fill="#d8cdd4"/>
<path d="M2 4 L6 3 L8 9 L4 12Z" fill="#2a2024"/>
<rect x="4" y="12" width="8" height="15" fill="#c08a9c"/>
<rect x="12" y="0" width="24" height="4" fill="#e4e0e4"/>
<ellipse cx="28" cy="4.5" rx="8" ry="2.5" fill="#2a2430"/>
<ellipse cx="28" cy="10" rx="5" ry="6" fill="#9b6a5e"/>
<path d="M14 27 L17 19 C22 16 34 16 39 19 L42 27Z" fill="#6c82c0"/><path d="M10 27 L13 17 L19 16 L18 27Z" fill="#b77fa8"/><circle cx="23" cy="10" r="2" fill="#444"/><circle cx="32" cy="10" r="2" fill="#444"/>
<rect x="38" y="0" width="8" height="10" fill="#b8bccb"/>
<rect x="41" y="5" width="7" height="22" fill="#b01f35"/>
</g></svg>
<div class="t" style="left:81.00px;top:126.54px;font-size:13.3px;color:#fff;transform:scaleX(0.9534);-webkit-text-stroke:0.55px currentColor;">Seu canal</div>
<div class="t" style="left:72.20px;top:146.48px;font-size:10.3px;color:#aaa;transform:scaleX(1.0315);-webkit-text-stroke:0.15px currentColor;">Cortes do Pililiu</div>
<div class="t" style="left:61.90px;top:186.47px;font-size:13.5px;color:#fff;transform:scaleX(0.9352);-webkit-text-stroke:0.45px currentColor;">Painel</div>
<div class="t" style="left:61.90px;top:227.27px;font-size:13.5px;color:#fff;transform:scaleX(0.9443);-webkit-text-stroke:0.45px currentColor;">Conteúdo</div>
<div class="t" style="left:61.90px;top:268.07px;font-size:13.5px;color:#fff;transform:scaleX(0.9735);-webkit-text-stroke:0.45px currentColor;">Analytics</div>
<div class="t" style="left:61.90px;top:308.87px;font-size:13.5px;color:#fff;transform:scaleX(0.9469);-webkit-text-stroke:0.45px currentColor;">Comunidade</div>
<div class="t" style="left:61.90px;top:349.67px;font-size:13.5px;color:#fff;transform:scaleX(0.9374);-webkit-text-stroke:0.45px currentColor;">Legendas</div>
<div class="t" style="left:61.90px;top:390.47px;font-size:13.5px;color:#fff;transform:scaleX(0.9481);-webkit-text-stroke:0.45px currentColor;">Detecção de conteúdo</div>
<div class="t" style="left:61.90px;top:431.27px;font-size:13.5px;color:#fff;transform:scaleX(0.9324);-webkit-text-stroke:0.45px currentColor;">Ganhos</div>
<div class="t" style="left:61.90px;top:472.07px;font-size:13.5px;color:#fff;transform:scaleX(0.9479);-webkit-text-stroke:0.45px currentColor;">Personalização</div>
<div class="t" style="left:61.90px;top:512.87px;font-size:13.5px;color:#fff;transform:scaleX(0.9554);-webkit-text-stroke:0.45px currentColor;">Biblioteca de áudio</div>
<div class="t" style="left:63.00px;top:553.87px;font-size:13.5px;color:#a4a4a4;transform:scaleX(0.9529);">Ideais diárias</div>
<div class="t" style="left:63.00px;top:594.67px;font-size:13.5px;color:#a4a4a4;transform:scaleX(0.9443);">Thumbnail Preview</div>
<div class="t" style="left:63.00px;top:635.47px;font-size:13.5px;color:#a4a4a4;transform:scaleX(0.9699);">More Tools</div>
<div class="t" style="left:61.60px;top:739.57px;font-size:13.5px;color:#fff;transform:scaleX(0.9510);-webkit-text-stroke:0.45px currentColor;">Configurações</div>
<div class="t" style="left:61.60px;top:780.17px;font-size:13.5px;color:#fff;transform:scaleX(0.9379);-webkit-text-stroke:0.45px currentColor;">Enviar feedback</div>
<div class="t" style="left:246.30px;top:18.90px;font-size:20.5px;color:#fff;transform:scaleX(0.9008);font-weight:bold;">Estatísticas do canal</div>
<div class="t" style="left:1187.10px;top:20.84px;font-size:12px;color:#fff;transform:scaleX(1.0046);-webkit-text-stroke:0.5px currentColor;">Modo avançado</div>
<div class="t" style="left:1091.80px;top:57.11px;font-size:10.5px;color:#aaa;transform:scaleX(0.9751);-webkit-text-stroke:0.15px currentColor;">23 de set. de 2024 – 16 de dez. ...</div>
<div class="t" style="left:1091.80px;top:72.57px;font-size:13.5px;color:#fff;transform:scaleX(0.9558);-webkit-text-stroke:0.2px currentColor;">Todo o período</div>
<div class="t" style="left:245.90px;top:75.54px;font-size:13.3px;color:#aaa;transform:scaleX(0.9661);-webkit-text-stroke:0.4px currentColor;">Visão geral</div>
<div class="t" style="left:343.80px;top:75.54px;font-size:13.3px;color:#aaa;transform:scaleX(0.9606);-webkit-text-stroke:0.4px currentColor;">Conteúdo</div>
<div class="t" style="left:433.20px;top:75.54px;font-size:13.3px;color:#aaa;transform:scaleX(0.9857);-webkit-text-stroke:0.4px currentColor;">Público</div>
<div class="t" style="left:509.60px;top:75.54px;font-size:13.3px;color:#fff;transform:scaleX(0.9713);-webkit-text-stroke:0.55px currentColor;">Receita</div>
<div class="t" style="left:586.80px;top:75.54px;font-size:13.3px;color:#aaa;transform:scaleX(0.9824);-webkit-text-stroke:0.4px currentColor;">Tendências</div>
<div class="t" style="left:711.40px;top:75.54px;font-size:13.3px;color:#aaa;transform:scaleX(0.9823);-webkit-text-stroke:0.4px currentColor;">Outliers</div>
<div class="t" style="left:812.20px;top:75.54px;font-size:13.3px;color:#aaa;transform:scaleX(0.9591);-webkit-text-stroke:0.4px currentColor;">Keywords</div>
<div class="t" style="left:924.00px;top:75.54px;font-size:13.3px;color:#aaa;transform:scaleX(0.9758);-webkit-text-stroke:0.4px currentColor;">Optimize</div>
<div class="t" style="left:255.30px;top:124.94px;font-size:12px;color:#0f0f0f;transform:scaleX(0.9775);-webkit-text-stroke:0.6px currentColor;">Tudo</div>
<div class="t" style="left:312.50px;top:124.94px;font-size:12px;color:#f1f1f1;transform:scaleX(1.0138);-webkit-text-stroke:0.6px currentColor;">Anúncios de página de exibição</div>
<div class="t" style="left:515.15px;top:124.94px;font-size:12px;color:#f1f1f1;transform:scaleX(1.0102);-webkit-text-stroke:0.6px currentColor;">Anúncios do Feed dos Shorts</div>
<div class="t" style="left:704.15px;top:124.94px;font-size:12px;color:#f1f1f1;transform:scaleX(1.0119);-webkit-text-stroke:0.6px currentColor;">Supers e presentes</div>
<div class="t" style="left:839.60px;top:124.94px;font-size:12px;color:#f1f1f1;transform:scaleX(1.0305);-webkit-text-stroke:0.6px currentColor;">Programa de afiliados</div>
<div class="t" style="left:713.20px;top:174.84px;font-size:10px;color:#aaa;transform:scaleX(1.0457);-webkit-text-stroke:0.25px currentColor;">Receita estimada</div>
<div class="t" style="left:711.60px;top:194.32px;font-size:19.7px;color:#fff;transform:scaleX(0.9694);-webkit-text-stroke:0.2px currentColor;">R$ 8.567,79</div>
<div class="t" style="left:1203.70px;top:294.01px;font-size:10.5px;color:#aaa;transform:scaleX(0.9449);-webkit-text-stroke:0.12px currentColor;">R$ 300,00</div>
<div class="t" style="left:1203.70px;top:325.01px;font-size:10.5px;color:#aaa;transform:scaleX(0.9449);-webkit-text-stroke:0.12px currentColor;">R$ 200,00</div>
<div class="t" style="left:1203.70px;top:355.91px;font-size:10.5px;color:#aaa;transform:scaleX(0.9449);-webkit-text-stroke:0.12px currentColor;">R$ 100,00</div>
<div class="t" style="left:1203.70px;top:387.11px;font-size:10.5px;color:#aaa;transform:scaleX(0.9325);-webkit-text-stroke:0.12px currentColor;">R$ 0,00</div>
<div class="t" style="left:260.40px;top:426.71px;font-size:10.5px;color:#aaa;transform:scaleX(0.9504);-webkit-text-stroke:0.12px currentColor;">23 de set. de ...</div>
<div class="t" style="left:375.40px;top:426.71px;font-size:10.5px;color:#aaa;transform:scaleX(0.9491);-webkit-text-stroke:0.12px currentColor;">7 de dez. de 2024</div>
<div class="t" style="left:528.15px;top:426.71px;font-size:10.5px;color:#aaa;transform:scaleX(0.9719);-webkit-text-stroke:0.12px currentColor;">20 de fev. de 2025</div>
<div class="t" style="left:683.90px;top:426.71px;font-size:10.5px;color:#aaa;transform:scaleX(0.9731);-webkit-text-stroke:0.12px currentColor;">6 de mai. de 2025</div>
<div class="t" style="left:837.90px;top:426.71px;font-size:10.5px;color:#aaa;transform:scaleX(0.9677);-webkit-text-stroke:0.12px currentColor;">19 de jul. de 2025</div>
<div class="t" style="left:992.40px;top:426.71px;font-size:10.5px;color:#aaa;transform:scaleX(0.9761);-webkit-text-stroke:0.12px currentColor;">2 de out. de 2025</div>
<div class="t" style="left:1115.40px;top:426.71px;font-size:10.5px;color:#aaa;transform:scaleX(0.9534);-webkit-text-stroke:0.12px currentColor;">16 de dez. de ...</div>
<div class="t" style="left:273.80px;top:476.54px;font-size:12px;color:#fff;transform:scaleX(1.0238);-webkit-text-stroke:0.5px currentColor;">Ver mais</div>
<div class="t" style="left:260.30px;top:561.50px;font-size:15px;color:#fff;transform:scaleX(1.0060);-webkit-text-stroke:0.55px currentColor;">Seus ganhos</div>
<div class="t" style="left:260.30px;top:584.43px;font-size:11.3px;color:#aaa;transform:scaleX(0.9834);">Estimativa · Últimos seis meses</div>
<div class="t" style="left:260.00px;top:625.14px;font-size:12px;color:#fff;transform:scaleX(0.9268);-webkit-text-stroke:0.12px currentColor;">dezembro (em curso)</div>
<div class="t" style="left:676.20px;top:625.14px;font-size:12px;color:#fff;transform:scaleX(0.8882);-webkit-text-stroke:0.12px currentColor;">R$ 977,42</div>
<div class="t" style="left:260.00px;top:659.29px;font-size:12px;color:#fff;transform:scaleX(0.9330);-webkit-text-stroke:0.12px currentColor;">novembro</div>
<div class="t" style="left:666.60px;top:659.29px;font-size:12px;color:#fff;transform:scaleX(0.9116);-webkit-text-stroke:0.12px currentColor;">R$ 1.411,85</div>
<div class="t" style="left:260.00px;top:693.44px;font-size:12px;color:#fff;transform:scaleX(0.9532);-webkit-text-stroke:0.12px currentColor;">outubro</div>
<div class="t" style="left:666.60px;top:693.44px;font-size:12px;color:#fff;transform:scaleX(0.8992);-webkit-text-stroke:0.12px currentColor;">R$ 3.031,49</div>
<div class="t" style="left:260.00px;top:727.59px;font-size:12px;color:#fff;transform:scaleX(0.9554);-webkit-text-stroke:0.12px currentColor;">setembro</div>
<div class="t" style="left:676.20px;top:727.59px;font-size:12px;color:#fff;transform:scaleX(0.8882);-webkit-text-stroke:0.12px currentColor;">R$ 738,29</div>
<div class="t" style="left:260.00px;top:761.74px;font-size:12px;color:#fff;transform:scaleX(0.9658);-webkit-text-stroke:0.12px currentColor;">agosto</div>
<div class="t" style="left:666.60px;top:761.74px;font-size:12px;color:#fff;transform:scaleX(0.8992);-webkit-text-stroke:0.12px currentColor;">R$ 1.941,15</div>
<div class="t" style="left:260.00px;top:795.89px;font-size:12px;color:#fff;transform:scaleX(0.9385);-webkit-text-stroke:0.12px currentColor;">julho</div>
<div class="t" style="left:676.20px;top:795.89px;font-size:12px;color:#fff;transform:scaleX(0.8882);-webkit-text-stroke:0.12px currentColor;">R$ 266,85</div>
<div class="t" style="left:795.00px;top:561.70px;font-size:15px;color:#fff;transform:scaleX(1.0323);-webkit-text-stroke:0.55px currentColor;">Performance do conteúdo</div>
<div class="t" style="left:795.00px;top:583.77px;font-size:11.5px;color:#aaa;transform:scaleX(0.9618);">Todo o período</div>
<div class="t" style="left:805.00px;top:625.24px;font-size:12px;color:#0f0f0f;transform:scaleX(1.0118);-webkit-text-stroke:0.45px currentColor;">Vídeos</div>
<div class="t" style="left:873.00px;top:625.24px;font-size:12px;color:#f1f1f1;transform:scaleX(1.0465);-webkit-text-stroke:0.45px currentColor;">Shorts</div>
<div class="t" style="left:795.00px;top:671.06px;font-size:16px;color:#fff;transform:scaleX(0.9382);font-weight:bold;">R$ 8.564,68</div>
<div class="t" style="left:795.00px;top:694.47px;font-size:11.5px;color:#aaa;transform:scaleX(0.9577);">Receita estimada</div>
<div class="t" style="left:794.90px;top:732.16px;font-size:12.8px;color:#fff;transform:scaleX(0.9730);font-weight:bold;">2,5 mi</div>
<div class="t" style="left:886.80px;top:732.16px;font-size:12.8px;color:#fff;transform:scaleX(0.9681);font-weight:bold;">R$ 3,39</div>
<div class="t" style="left:794.90px;top:751.57px;font-size:11.5px;color:#aaa;transform:scaleX(0.9742);">Visualizações</div>
<div class="t" style="left:886.80px;top:751.57px;font-size:11.5px;color:#aaa;transform:scaleX(0.9561);">Receita por mil visualizações (RPM)</div>
<div class="t" style="left:852.90px;top:796.54px;font-size:12px;color:#fff;transform:scaleX(0.8333);-webkit-text-stroke:0.3px currentColor;">LEONCIO DESCOBRE IRMÃO GÊMEO D...</div>
<div class="t" style="left:1217.20px;top:796.84px;font-size:12px;color:#fff;transform:scaleX(0.8882);-webkit-text-stroke:0.3px currentColor;">R$ 532,58</div>
</body></html>
